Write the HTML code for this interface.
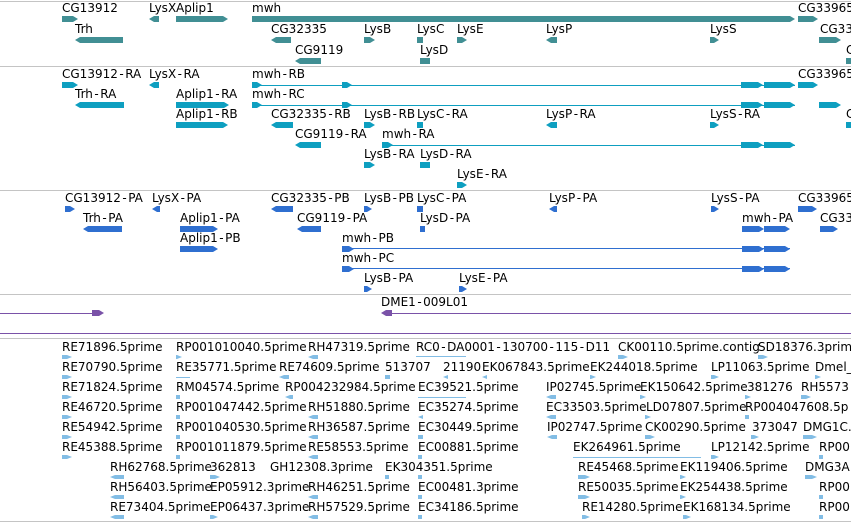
<!DOCTYPE html>
<html><head><meta charset="utf-8"><style>
html,body{margin:0;padding:0;width:851px;height:522px;overflow:hidden;background:#fff;position:relative}
.t{position:absolute;font-family:"DejaVu Sans","Liberation Sans",sans-serif;font-size:12px;line-height:14px;white-space:nowrap;color:#000}
.t i{font-style:normal;padding:0 1.5px}
.g{position:absolute;height:6px}
.s{position:absolute;height:4px}
.r{clip-path:polygon(0 0,calc(100% - 5px) 0,100% 50%,calc(100% - 5px) 100%,0 100%)}
.l{clip-path:polygon(5px 0,100% 0,100% 100%,5px 100%,0 50%)}
.h{position:absolute;height:1px}
.a{background:#418f94}.b{background:#0e9fc0}.c{background:#2f6fd0}.p{background:#7a52a8}.e{background:#82bde5}
.sep{position:absolute;left:0;width:851px;height:1px;background:#c4c4c4}
</style></head><body>
<div class="sep" style="top:1px"></div>
<div class="sep" style="top:66px"></div>
<div class="sep" style="top:190px"></div>
<div class="sep" style="top:294px"></div>
<div class="h p" style="top:333px;left:0;width:851px"></div>
<div class="sep" style="top:338px"></div>
<div class="sep" style="top:521px"></div>

<!-- section 1 -->
<div class="t" style="left:62px;top:1px">CG13912</div><div class="g a r" style="left:62px;top:16px;width:16px"></div>
<div class="t" style="left:149px;top:1px">LysX</div><div class="g a l" style="left:149px;top:16px;width:10px"></div>
<div class="t" style="left:176px;top:1px">Aplip1</div><div class="g a r" style="left:176px;top:16px;width:52px"></div>
<div class="t" style="left:252px;top:1px">mwh</div><div class="g a r" style="left:252px;top:16px;width:543px"></div>
<div class="t" style="left:798px;top:1px">CG33965</div><div class="g a r" style="left:798px;top:16px;width:20px"></div>
<div class="t" style="left:75px;top:22px">Trh</div><div class="g a l" style="left:75px;top:37px;width:48px"></div>
<div class="t" style="left:271px;top:22px">CG32335</div><div class="g a l" style="left:271px;top:37px;width:20px"></div>
<div class="t" style="left:364px;top:22px">LysB</div><div class="g a r" style="left:364px;top:37px;width:11px"></div>
<div class="t" style="left:417px;top:22px">LysC</div><div class="g a" style="left:417px;top:37px;width:6px"></div>
<div class="t" style="left:457px;top:22px">LysE</div><div class="g a r" style="left:457px;top:37px;width:10px"></div>
<div class="t" style="left:546px;top:22px">LysP</div><div class="g a l" style="left:546px;top:37px;width:11px"></div>
<div class="t" style="left:710px;top:22px">LysS</div><div class="g a r" style="left:710px;top:37px;width:9px"></div>
<div class="t" style="left:820px;top:22px">CG33</div><div class="g a r" style="left:819px;top:37px;width:22px"></div>
<div class="t" style="left:295px;top:43px">CG9119</div><div class="g a l" style="left:295px;top:58px;width:26px"></div>
<div class="t" style="left:420px;top:43px">LysD</div><div class="g a" style="left:420px;top:58px;width:10px"></div>
<div class="t" style="left:846px;top:43px">C</div><div class="g a" style="left:846px;top:58px;width:5px"></div>

<!-- section 2 -->
<div class="t" style="left:62px;top:67px">CG13912<i>-</i>RA</div><div class="g b r" style="left:62px;top:82px;width:16px"></div>
<div class="t" style="left:149px;top:67px">LysX<i>-</i>RA</div><div class="g b l" style="left:149px;top:82px;width:10px"></div>
<div class="t" style="left:252px;top:67px">mwh<i>-</i>RB</div><div class="h b" style="left:252px;top:85px;width:543px"></div>
<div class="g b r" style="left:252px;top:82px;width:10px"></div><div class="g b r" style="left:342px;top:82px;width:10px"></div>
<div class="g b r" style="left:741px;top:82px;width:22px"></div><div class="g b r" style="left:764px;top:82px;width:31px"></div>
<div class="t" style="left:798px;top:67px">CG33965</div><div class="g b r" style="left:798px;top:82px;width:20px"></div>
<div class="t" style="left:75px;top:87px">Trh<i>-</i>RA</div><div class="g b l" style="left:75px;top:102px;width:49px"></div>
<div class="t" style="left:176px;top:87px">Aplip1<i>-</i>RA</div><div class="g b r" style="left:176px;top:102px;width:53px"></div>
<div class="t" style="left:252px;top:87px">mwh<i>-</i>RC</div><div class="h b" style="left:252px;top:105px;width:543px"></div>
<div class="g b r" style="left:252px;top:102px;width:10px"></div><div class="g b r" style="left:342px;top:102px;width:10px"></div>
<div class="g b r" style="left:741px;top:102px;width:22px"></div><div class="g b r" style="left:764px;top:102px;width:31px"></div>
<div class="g b r" style="left:819px;top:102px;width:22px"></div>
<div class="t" style="left:176px;top:107px">Aplip1<i>-</i>RB</div><div class="g b r" style="left:176px;top:122px;width:52px"></div>
<div class="t" style="left:271px;top:107px">CG32335<i>-</i>RB</div><div class="g b l" style="left:271px;top:122px;width:22px"></div>
<div class="t" style="left:364px;top:107px">LysB<i>-</i>RB</div><div class="g b r" style="left:364px;top:122px;width:11px"></div>
<div class="t" style="left:417px;top:107px">LysC<i>-</i>RA</div><div class="g b" style="left:417px;top:122px;width:6px"></div>
<div class="t" style="left:546px;top:107px">LysP<i>-</i>RA</div><div class="g b l" style="left:546px;top:122px;width:11px"></div>
<div class="t" style="left:710px;top:107px">LysS<i>-</i>RA</div><div class="g b r" style="left:710px;top:122px;width:9px"></div>
<div class="t" style="left:846px;top:107px">C</div><div class="g b" style="left:846px;top:122px;width:5px"></div>
<div class="t" style="left:295px;top:127px">CG9119<i>-</i>RA</div><div class="g b l" style="left:295px;top:142px;width:26px"></div>
<div class="t" style="left:382px;top:127px">mwh<i>-</i>RA</div><div class="h b" style="left:382px;top:145px;width:413px"></div>
<div class="g b r" style="left:382px;top:142px;width:11px"></div>
<div class="g b r" style="left:741px;top:142px;width:22px"></div><div class="g b r" style="left:764px;top:142px;width:31px"></div>
<div class="t" style="left:364px;top:147px">LysB<i>-</i>RA</div><div class="g b r" style="left:364px;top:162px;width:11px"></div>
<div class="t" style="left:420px;top:147px">LysD<i>-</i>RA</div><div class="g b" style="left:420px;top:162px;width:10px"></div>
<div class="t" style="left:457px;top:167px">LysE<i>-</i>RA</div><div class="g b r" style="left:457px;top:182px;width:10px"></div>

<!-- section 3 -->
<div class="t" style="left:65px;top:191px">CG13912<i>-</i>PA</div><div class="g c r" style="left:65px;top:206px;width:10px"></div>
<div class="t" style="left:152px;top:191px">LysX<i>-</i>PA</div><div class="g c l" style="left:152px;top:206px;width:8px"></div>
<div class="t" style="left:271px;top:191px">CG32335<i>-</i>PB</div><div class="g c l" style="left:271px;top:206px;width:22px"></div>
<div class="t" style="left:364px;top:191px">LysB<i>-</i>PB</div><div class="g c r" style="left:364px;top:206px;width:8px"></div>
<div class="t" style="left:417px;top:191px">LysC<i>-</i>PA</div><div class="g c" style="left:417px;top:206px;width:6px"></div>
<div class="t" style="left:549px;top:191px">LysP<i>-</i>PA</div><div class="g c l" style="left:549px;top:206px;width:8px"></div>
<div class="t" style="left:711px;top:191px">LysS<i>-</i>PA</div><div class="g c r" style="left:711px;top:206px;width:8px"></div>
<div class="t" style="left:798px;top:191px">CG33965</div><div class="g c r" style="left:798px;top:206px;width:19px"></div>
<div class="t" style="left:83px;top:211px">Trh<i>-</i>PA</div><div class="g c l" style="left:83px;top:226px;width:39px"></div>
<div class="t" style="left:180px;top:211px">Aplip1<i>-</i>PA</div><div class="g c r" style="left:180px;top:226px;width:38px"></div>
<div class="t" style="left:297px;top:211px">CG9119<i>-</i>PA</div><div class="g c l" style="left:297px;top:226px;width:24px"></div>
<div class="t" style="left:420px;top:211px">LysD<i>-</i>PA</div><div class="g c" style="left:420px;top:226px;width:5px"></div>
<div class="t" style="left:742px;top:211px">mwh<i>-</i>PA</div><div class="g c r" style="left:742px;top:226px;width:22px"></div><div class="g c r" style="left:764px;top:226px;width:26px"></div>
<div class="t" style="left:820px;top:211px">CG33</div><div class="g c r" style="left:820px;top:226px;width:18px"></div>
<div class="t" style="left:180px;top:231px">Aplip1<i>-</i>PB</div><div class="g c r" style="left:180px;top:246px;width:38px"></div>
<div class="t" style="left:342px;top:231px">mwh<i>-</i>PB</div><div class="h c" style="left:342px;top:248px;width:448px"></div>
<div class="g c r" style="left:342px;top:246px;width:12px"></div><div class="g c r" style="left:742px;top:246px;width:22px"></div><div class="g c r" style="left:764px;top:246px;width:26px"></div>
<div class="t" style="left:342px;top:251px">mwh<i>-</i>PC</div><div class="h c" style="left:342px;top:268px;width:448px"></div>
<div class="g c r" style="left:342px;top:266px;width:12px"></div><div class="g c r" style="left:742px;top:266px;width:22px"></div><div class="g c r" style="left:764px;top:266px;width:26px"></div>
<div class="t" style="left:364px;top:271px">LysB<i>-</i>PA</div><div class="g c r" style="left:364px;top:286px;width:8px"></div>
<div class="t" style="left:459px;top:271px">LysE<i>-</i>PA</div><div class="g c r" style="left:459px;top:286px;width:8px"></div>

<!-- section 4 -->
<div class="t" style="left:381px;top:295px">DME1<i>-</i>009L01</div>
<div class="h p" style="left:0;top:313px;width:92px"></div><div class="g p r" style="left:92px;top:310px;width:12px"></div>
<div class="g p l" style="left:381px;top:310px;width:11px"></div><div class="h p" style="left:392px;top:313px;width:459px"></div>

<!-- section 5 -->
<div class="t" style="left:62px;top:340px">RE71896.5prime</div><div class="s e r" style="left:62px;top:355px;width:10px"></div>
<div class="t" style="left:176px;top:340px">RP001010040.5prime</div><div class="s e r" style="left:176px;top:355px;width:6px"></div>
<div class="t" style="left:308px;top:340px">RH47319.5prime</div><div class="s e l" style="left:308px;top:355px;width:10px"></div>
<div class="t" style="left:416px;top:340px">RC0<i>-</i>DA0001<i>-</i>130700<i>-</i>115<i>-</i>D11</div><div class="h e" style="left:416px;top:356px;width:50px"></div>
<div class="t" style="left:618px;top:340px">CK00110.5prime.contig</div><div class="s e r" style="left:618px;top:355px;width:10px"></div>
<div class="t" style="left:758px;top:340px">SD18376.3prime</div><div class="s e r" style="left:758px;top:355px;width:10px"></div>

<div class="t" style="left:62px;top:360px">RE70790.5prime</div><div class="s e r" style="left:62px;top:375px;width:10px"></div>
<div class="t" style="left:176px;top:360px">RE35771.5prime</div><div class="h e" style="left:176px;top:377px;width:14px"></div>
<div class="t" style="left:279px;top:360px">RE74609.5prime</div><div class="s e l" style="left:279px;top:375px;width:10px"></div>
<div class="t" style="left:385px;top:360px">513707</div><div class="s e" style="left:385px;top:375px;width:5px"></div>
<div class="t" style="left:443px;top:360px">21190</div><div class="s e l" style="left:443px;top:375px;width:5px"></div>
<div class="t" style="left:482px;top:360px">EK067843.5prime</div><div class="s e l" style="left:482px;top:375px;width:5px"></div>
<div class="t" style="left:590px;top:360px">EK244018.5prime</div><div class="s e r" style="left:590px;top:375px;width:6px"></div>
<div class="t" style="left:711px;top:360px">LP11063.5prime</div><div class="s e r" style="left:711px;top:375px;width:8px"></div>
<div class="t" style="left:815px;top:360px">Dmel_</div><div class="s e r" style="left:815px;top:375px;width:6px"></div>

<div class="t" style="left:62px;top:380px">RE71824.5prime</div><div class="s e r" style="left:62px;top:395px;width:10px"></div>
<div class="t" style="left:176px;top:380px">RM04574.5prime</div><div class="s e" style="left:176px;top:395px;width:4px"></div>
<div class="t" style="left:285px;top:380px">RP004232984.5prime</div><div class="s e l" style="left:285px;top:395px;width:8px"></div>
<div class="t" style="left:418px;top:380px">EC39521.5prime</div><div class="h e" style="left:418px;top:397px;width:48px"></div>
<div class="t" style="left:546px;top:380px">IP02745.5prime</div><div class="s e l" style="left:546px;top:395px;width:10px"></div>
<div class="t" style="left:640px;top:380px">EK150642.5prime</div><div class="s e r" style="left:640px;top:395px;width:6px"></div>
<div class="t" style="left:747px;top:380px">381276</div><div class="s e r" style="left:745px;top:395px;width:6px"></div>
<div class="t" style="left:801px;top:380px">RH5573</div><div class="s e r" style="left:801px;top:395px;width:10px"></div>

<div class="t" style="left:62px;top:400px">RE46720.5prime</div><div class="s e r" style="left:62px;top:415px;width:10px"></div>
<div class="t" style="left:176px;top:400px">RP001047442.5prime</div><div class="s e" style="left:176px;top:415px;width:4px"></div>
<div class="t" style="left:308px;top:400px">RH51880.5prime</div><div class="s e l" style="left:308px;top:415px;width:10px"></div>
<div class="t" style="left:418px;top:400px">EC35274.5prime</div><div class="s e l" style="left:418px;top:415px;width:5px"></div>
<div class="t" style="left:546px;top:400px">EC33503.5prime</div><div class="s e l" style="left:546px;top:415px;width:10px"></div>
<div class="t" style="left:646px;top:400px">LD07807.5prime</div><div class="s e r" style="left:645px;top:415px;width:6px"></div>
<div class="t" style="left:745px;top:400px">RP004047608.5p</div><div class="s e" style="left:745px;top:415px;width:4px"></div>

<div class="t" style="left:62px;top:420px">RE54942.5prime</div><div class="s e r" style="left:62px;top:435px;width:10px"></div>
<div class="t" style="left:176px;top:420px">RP001040530.5prime</div><div class="s e" style="left:176px;top:435px;width:4px"></div>
<div class="t" style="left:308px;top:420px">RH36587.5prime</div><div class="s e l" style="left:308px;top:435px;width:10px"></div>
<div class="t" style="left:418px;top:420px">EC30449.5prime</div><div class="s e" style="left:418px;top:435px;width:5px"></div>
<div class="t" style="left:547px;top:420px">IP02747.5prime</div><div class="s e l" style="left:547px;top:435px;width:10px"></div>
<div class="t" style="left:645px;top:420px">CK00290.5prime</div><div class="s e r" style="left:645px;top:435px;width:10px"></div>
<div class="t" style="left:752px;top:420px">373047</div><div class="s e r" style="left:751px;top:435px;width:8px"></div>
<div class="t" style="left:803px;top:420px">DMG1C.</div><div class="s e r" style="left:803px;top:435px;width:14px"></div>

<div class="t" style="left:62px;top:440px">RE45388.5prime</div><div class="s e r" style="left:62px;top:455px;width:10px"></div>
<div class="t" style="left:176px;top:440px">RP001011879.5prime</div><div class="s e" style="left:176px;top:455px;width:4px"></div>
<div class="t" style="left:308px;top:440px">RE58553.5prime</div><div class="s e l" style="left:308px;top:455px;width:10px"></div>
<div class="t" style="left:418px;top:440px">EC00881.5prime</div><div class="s e" style="left:418px;top:455px;width:4px"></div>
<div class="t" style="left:573px;top:440px">EK264961.5prime</div><div class="h e" style="left:573px;top:457px;width:128px"></div>
<div class="t" style="left:711px;top:440px">LP12142.5prime</div><div class="s e r" style="left:711px;top:455px;width:8px"></div>
<div class="t" style="left:819px;top:440px">RP00</div><div class="s e" style="left:819px;top:455px;width:4px"></div>

<div class="t" style="left:110px;top:460px">RH62768.5prime</div><div class="s e l" style="left:110px;top:475px;width:14px"></div>
<div class="t" style="left:210px;top:460px">362813</div><div class="s e r" style="left:210px;top:475px;width:10px"></div>
<div class="t" style="left:270px;top:460px">GH12308.3prime</div>
<div class="t" style="left:385px;top:460px">EK304351.5prime</div><div class="s e" style="left:385px;top:475px;width:4px"></div>
<div class="s e" style="left:418px;top:475px;width:4px"></div>
<div class="t" style="left:578px;top:460px">RE45468.5prime</div><div class="s e r" style="left:578px;top:475px;width:12px"></div>
<div class="t" style="left:680px;top:460px">EK119406.5prime</div><div class="s e r" style="left:680px;top:475px;width:6px"></div>
<div class="t" style="left:805px;top:460px">DMG3A</div><div class="s e r" style="left:805px;top:475px;width:12px"></div>

<div class="t" style="left:110px;top:480px">RH56403.5prime</div><div class="s e l" style="left:110px;top:495px;width:14px"></div>
<div class="t" style="left:210px;top:480px">EP05912.3prime</div>
<div class="t" style="left:308px;top:480px">RH46251.5prime</div><div class="s e l" style="left:308px;top:495px;width:10px"></div>
<div class="t" style="left:418px;top:480px">EC00481.3prime</div><div class="s e" style="left:418px;top:495px;width:4px"></div>
<div class="t" style="left:578px;top:480px">RE50035.5prime</div><div class="s e r" style="left:578px;top:495px;width:12px"></div>
<div class="t" style="left:680px;top:480px">EK254438.5prime</div><div class="s e r" style="left:680px;top:495px;width:6px"></div>
<div class="t" style="left:819px;top:480px">RP00</div><div class="s e" style="left:819px;top:495px;width:4px"></div>

<div class="t" style="left:110px;top:500px">RE73404.5prime</div><div class="s e l" style="left:110px;top:515px;width:14px"></div>
<div class="t" style="left:210px;top:500px">EP06437.3prime</div><div class="s e r" style="left:210px;top:515px;width:8px"></div>
<div class="t" style="left:308px;top:500px">RH57529.5prime</div><div class="s e l" style="left:308px;top:515px;width:10px"></div>
<div class="t" style="left:418px;top:500px">EC34186.5prime</div><div class="s e" style="left:418px;top:515px;width:4px"></div>
<div class="t" style="left:582px;top:500px">RE14280.5prime</div><div class="s e r" style="left:582px;top:515px;width:8px"></div>
<div class="t" style="left:683px;top:500px">EK168134.5prime</div><div class="s e r" style="left:683px;top:515px;width:8px"></div>
<div class="t" style="left:819px;top:500px">RP00</div><div class="s e" style="left:819px;top:515px;width:4px"></div>
</body></html>
